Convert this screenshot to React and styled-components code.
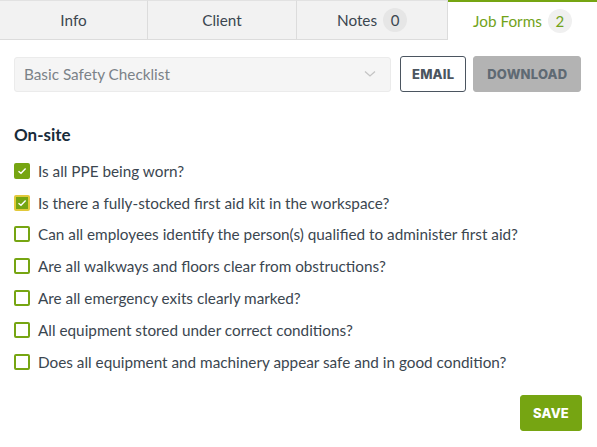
import React, { useState } from 'react';
import styled, { createGlobalStyle } from 'styled-components';

const GlobalStyle = createGlobalStyle`
  body {
    margin: 0;
    background: #ffffff;
    font-family: Lato, "Open Sans", sans-serif;
    color: #3b4650;
  }
`;

const Page = styled.div`
  width: 597px;
  height: 447px;
  background: #fff;
`;

const TabBar = styled.div`
  display: grid;
  grid-template-columns: 148px 149px 151px 149px;
  height: 40px;
`;

const Tab = styled.div`
  display: flex;
  align-items: center;
  justify-content: center;
  gap: 6px;
  box-sizing: border-box;
  font-size: 15.3px;
  color: ${(p) => (p.active ? '#72a31a' : '#3b4650')};
  background: ${(p) => (p.active ? '#fff' : '#f2f2f2')};
  border-top: ${(p) => (p.active ? '2px solid #76a512' : '1px solid #e2e2e2')};
  border-right: ${(p) => (p.active ? 'none' : '1px solid #dcdcdc')};
  border-bottom: ${(p) => (p.active ? 'none' : '1px solid #dcdcdc')};
`;

const Count = styled.span`
  display: inline-flex;
  align-items: center;
  justify-content: center;
  min-width: 24px;
  height: 24px;
  border-radius: 12px;
  background: ${(p) => (p.active ? '#f0f0f0' : '#e6e6e6')};
  color: ${(p) => (p.active ? '#72a31a' : '#3b4650')};
  font-size: 15px;
`;

const Body = styled.div`
  padding: 16px 15px 0 14px;
`;

const Toolbar = styled.div`
  display: flex;
  align-items: center;
`;

const Select = styled.div`
  flex: 0 0 377px;
  height: 35px;
  box-sizing: border-box;
  display: flex;
  align-items: center;
  justify-content: space-between;
  padding: 0 14px 0 9px;
  margin-right: 9px;
  background: #f5f5f5;
  border: 1px solid #ebebeb;
  border-radius: 3px;
  font-size: 15.3px;
  color: #7b8288;
`;

const Button = styled.button`
  height: 36px;
  box-sizing: border-box;
  padding: 0 ${(p) => p.pad || 12}px;
  margin-left: ${(p) => p.gap || 0}px;
  font-family: Inter, Lato, sans-serif;
  font-weight: 800;
  font-size: 13px;
  letter-spacing: 0.2px;
  border-radius: 3px;
  border: 1px solid ${(p) => p.border};
  background: ${(p) => p.bg};
  color: ${(p) => p.fg};
`;

const Heading = styled.h3`
  margin: 32px 0 10px;
  font-size: 17px;
  font-weight: 700;
  color: #172b3a;
`;

const List = styled.div`
  display: flex;
  flex-direction: column;
`;

const Row = styled.label`
  display: flex;
  align-items: center;
  gap: 8px;
  height: 31.8px;
  font-size: 15.3px;
  color: #3b4650;
`;

const Box = styled.span`
  width: 16px;
  height: 16px;
  box-sizing: border-box;
  border-radius: 2px;
  display: flex;
  align-items: center;
  justify-content: center;
  background: ${(p) => (p.checked ? '#76a512' : '#fff')};
  border: 2px solid ${(p) => (p.focus ? '#e2c93a' : '#76a512')};
`;

const Footer = styled.div`
  display: flex;
  justify-content: flex-end;
  margin-top: 17px;
`;

const items = [
  'Is all PPE being worn?',
  'Is there a fully-stocked first aid kit in the workspace?',
  'Can all employees identify the person(s) qualified to administer first aid?',
  'Are all walkways and floors clear from obstructions?',
  'Are all emergency exits clearly marked?',
  'All equipment stored under correct conditions?',
  'Does all equipment and machinery appear safe and in good condition?',
];

const Check = () => (
  <svg width="10" height="8" viewBox="0 0 10 8">
    <path d="M1.5 4.2 L4 6.3 L8.6 1.6" fill="none" stroke="#fff" strokeWidth="1.4" />
  </svg>
);

export default function App() {
  const [checked, setChecked] = useState([true, true, false, false, false, false, false]);
  const toggle = (i) => setChecked((c) => c.map((v, j) => (j === i ? !v : v)));

  return (
    <Page>
      <GlobalStyle />
      <TabBar>
        <Tab>Info</Tab>
        <Tab>Client</Tab>
        <Tab>
          Notes <Count>0</Count>
        </Tab>
        <Tab active>
          Job Forms <Count active>2</Count>
        </Tab>
      </TabBar>
      <Body>
        <Toolbar>
          <Select>
            Basic Safety Checklist
            <svg width="12" height="8" viewBox="0 0 12 8">
              <path d="M1 1.5 L6 6 L11 1.5" fill="none" stroke="#c4c4c4" strokeWidth="1.3" />
            </svg>
          </Select>
          <Button bg="#fff" border="#4b5560" fg="#4b5560" pad={11}>
            EMAIL
          </Button>
          <Button bg="#b3b3b3" border="#b3b3b3" fg="#5f6a73" pad={13} gap={7}>
            DOWNLOAD
          </Button>
        </Toolbar>
        <Heading>On-site</Heading>
        <List>
          {items.map((text, i) => (
            <Row key={text} onClick={() => toggle(i)}>
              <Box checked={checked[i]} focus={i === 1}>
                {checked[i] && <Check />}
              </Box>
              {text}
            </Row>
          ))}
        </List>
        <Footer>
          <Button bg="#76a512" border="#76a512" fg="#fff" pad={12}>
            SAVE
          </Button>
        </Footer>
      </Body>
    </Page>
  );
}
